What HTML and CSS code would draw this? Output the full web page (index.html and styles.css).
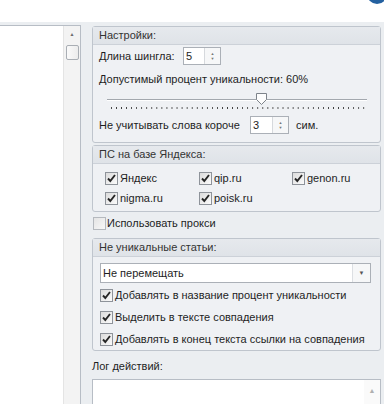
FILE: index.html
```html
<!DOCTYPE html>
<html lang="ru">
<head>
    <meta charset="UTF-8">
    <title>Настройки</title>
    <link rel="stylesheet" href="styles.css">
</head>
<body>
    <div class="top"><span class="orb"></span></div>

    <div class="main">
        <!-- left list -->
        <div class="list">
            <div class="vscroll">
                <span class="sc-arrow">&#9650;</span>
                <span class="thumb"></span>
            </div>
        </div>

        <div class="panel">
            <!-- settings -->
            <div class="group">
                <div class="group-head">Настройки:</div>
                <div class="group-body body-settings">
                    <div class="row row-spin">
                        <span class="lbl lbl-shingle">Длина шингла:</span>
                        <span class="spin spin-shingle">
                            <span class="spin-val">5</span>
                            <span class="spin-btn"><span>&#9650;</span><span>&#9660;</span></span>
                        </span>
                    </div>
                    <div class="row row-text">Допустимый процент уникальности: 60%</div>
                    <div class="slider">
                        <span class="track"></span>
                        <span class="ticks"></span>
                        <svg class="knob" width="11" height="12" viewBox="0 0 11 12">
                            <path d="M0.5 0.5 H10.5 V6.5 L5.5 11.5 L0.5 6.5 Z" fill="#fdfdfd" stroke="#7d838a"/>
                        </svg>
                    </div>
                    <div class="row row-spin row-short">
                        <span class="lbl lbl-short">Не учитывать слова короче</span>
                        <span class="spin spin-short">
                            <span class="spin-val">3</span>
                            <span class="spin-btn"><span>&#9650;</span><span>&#9660;</span></span>
                        </span>
                        <span class="unit">сим.</span>
                    </div>
                </div>
            </div>

            <!-- search engines -->
            <div class="group group-ps">
                <div class="group-head">ПС на базе Яндекса:</div>
                <div class="group-body engines">
                    <label class="check"><span class="cb on"></span>Яндекс</label>
                    <label class="check"><span class="cb on"></span>qip.ru</label>
                    <label class="check"><span class="cb on"></span>genon.ru</label>
                    <label class="check"><span class="cb on"></span>nigma.ru</label>
                    <label class="check"><span class="cb on"></span>poisk.ru</label>
                </div>
            </div>

            <label class="check proxy"><span class="cb"></span>Использовать прокси</label>

            <!-- not unique -->
            <div class="group group-nu">
                <div class="group-head">Не уникальные статьи:</div>
                <div class="group-body body-nu">
                    <div class="combo">
                        <span class="combo-val">Не перемещать</span>
                        <span class="combo-btn">&#9660;</span>
                    </div>
                    <label class="check nu-row"><span class="cb on"></span>Добавлять в название процент уникальности</label>
                    <label class="check nu-row"><span class="cb on"></span>Выделить в тексте совпадения</label>
                    <label class="check nu-row"><span class="cb on"></span>Добавлять в конец текста ссылки на совпадения</label>
                </div>
            </div>

            <div class="log-label">Лог действий:</div>
            <div class="log">
                <div class="vscroll log-scroll"><span class="sc-arrow">&#9650;</span></div>
            </div>
        </div>
    </div>
</body>
</html>
```

FILE: styles.css
```css
body {
    margin: 0;
    width: 384px;
    height: 404px;
    overflow: hidden;
    background: #fff;
    font-family: "Liberation Sans", Arial, sans-serif;
    font-size: 11px;
    color: #1e1e1e;
    white-space: nowrap;
}
.top {
    height: 22px;
    position: relative;
}
.orb {
    position: absolute;
    left: 367px;
    top: -16px;
    width: 20px;
    height: 20px;
    border-radius: 50%;
    background: #2461a0;
}
.main {
    display: flex;
    height: 382px;
    background: #ebeef1;
}

/* left list */
.list {
    width: 80px;
    margin-top: 3px;
    margin-left: -1px;
    background: #fff;
    border: 1px solid #b7bdc5;
    border-bottom: none;
    display: flex;
    justify-content: flex-end;
}
.vscroll {
    width: 16px;
    background: #f3f3f3;
    border-left: 1px solid #e4e4e4;
    display: flex;
    flex-direction: column;
    align-items: center;
}
.sc-arrow {
    font-size: 5px;
    line-height: 16px;
    height: 19px;
    color: #6c6c6c;
}
.thumb {
    width: 13px;
    height: 15px;
    box-sizing: border-box;
    border: 1px solid #a9aeb4;
    border-radius: 2px;
    background: linear-gradient(to right, #fafafa, #ececec);
}

/* right panel */
.panel {
    width: 289px;
    margin-left: 11px;
    padding-top: 4px;
}
.group {
    border: 1px solid #bfc5cd;
    border-radius: 3px;
    background: #eff1f4;
}
.group-head {
    height: 17px;
    line-height: 17px;
    padding-left: 6px;
    background: linear-gradient(#e6e9ed, #dfe3e8);
    border-bottom: 1px solid #ccd1d8;
    color: #333;
}
.group-body {
    padding-left: 6px;
}
.row {
    display: flex;
    align-items: center;
}
.row-spin {
    height: 18px;
    margin-top: 2px;
}
.row-text {
    height: 16px;
    margin-top: 6px;
}
.row-short {
    margin-top: 3px;
}
.body-settings {
    padding-bottom: 8px;
}
.lbl-shingle {
    width: 84px;
}
.lbl-short {
    width: 151px;
}
.unit {
    margin-left: 7px;
}

/* spin edit */
.spin {
    display: flex;
    height: 18px;
    box-sizing: border-box;
    border: 1px solid #abb0b7;
    background: #fff;
}
.spin-shingle {
    width: 38px;
}
.spin-short {
    width: 39px;
}
.spin-val {
    flex: 1;
    padding-left: 2px;
    line-height: 16px;
}
.spin-btn {
    width: 15px;
    border-left: 1px solid #d6d9dd;
    background: #f6f7f8;
    display: flex;
    flex-direction: column;
    align-items: center;
    justify-content: center;
    font-size: 4px;
    line-height: 5px;
    color: #777;
}

/* slider */
.slider {
    position: relative;
    height: 26px;
}
.track {
    position: absolute;
    left: 8px;
    top: 12px;
    width: 260px;
    height: 1px;
    background: #a3a8ae;
    border-bottom: 1px solid #fff;
}
.ticks {
    position: absolute;
    left: 12px;
    top: 20px;
    width: 254px;
    height: 2px;
    background: linear-gradient(to right, #3a3a3a 1px, transparent 1px);
    background-size: 5.06px 2px;
}
.knob {
    position: absolute;
    left: 157px;
    top: 6px;
}

/* checkboxes */
.group-ps {
    margin-top: 2px;
}
.engines {
    display: grid;
    grid-template-columns: 94px 93px auto;
    grid-auto-rows: 20px;
    padding: 4px 0 3px 12px;
}
.check {
    display: flex;
    align-items: center;
}
.cb {
    width: 13px;
    height: 13px;
    box-sizing: border-box;
    margin-right: 2px;
    border: 1px solid #8e939a;
    background: linear-gradient(135deg, #dcdcdc, #fbfbfb);
    flex-shrink: 0;
}
.cb.on {
    background-color: #f4f4f4;
    background-image: url("data:image/svg+xml,%3Csvg xmlns='http://www.w3.org/2000/svg' width='11' height='11'%3E%3Cpath d='M2 5.5 L4.3 8 L9 2' fill='none' stroke='%23262626' stroke-width='1.9'/%3E%3C/svg%3E"), linear-gradient(135deg, #dcdcdc, #fbfbfb);
}
.proxy {
    height: 16px;
    margin: 3px 0 0 1px;
}
.proxy .cb {
    border-color: #b5b9be;
    background: linear-gradient(135deg, #e4e4e4, #f8f8f8);
    margin-right: 1px;
}

/* not unique */
.group-nu {
    margin-top: 7px;
}
.body-nu {
    padding-left: 7px;
}
.combo {
    display: flex;
    width: 271px;
    height: 20px;
    box-sizing: border-box;
    margin-top: 6px;
    margin-bottom: 1px;
    border: 1px solid #abb0b7;
    background: #fff;
}
.combo-val {
    flex: 1;
    padding-left: 2px;
    line-height: 18px;
}
.combo-btn {
    width: 17px;
    border-left: 1px solid #dcdfe3;
    background: #f6f7f8;
    font-size: 6px;
    line-height: 18px;
    text-align: center;
    color: #555;
}
.nu-row {
    height: 22px;
}

/* log */
.log-label {
    height: 16px;
    line-height: 16px;
    margin-top: 7px;
}
.log {
    margin-top: 5px;
    height: 40px;
    border: 1px solid #b7bdc5;
    background: #fff;
    display: flex;
    justify-content: flex-end;
}
.log-scroll {
    background: #fafafa;
    border-left: none;
}
.log-scroll .sc-arrow {
    color: #b0b0b0;
    font-size: 7px;
    line-height: 22px;
}
```
